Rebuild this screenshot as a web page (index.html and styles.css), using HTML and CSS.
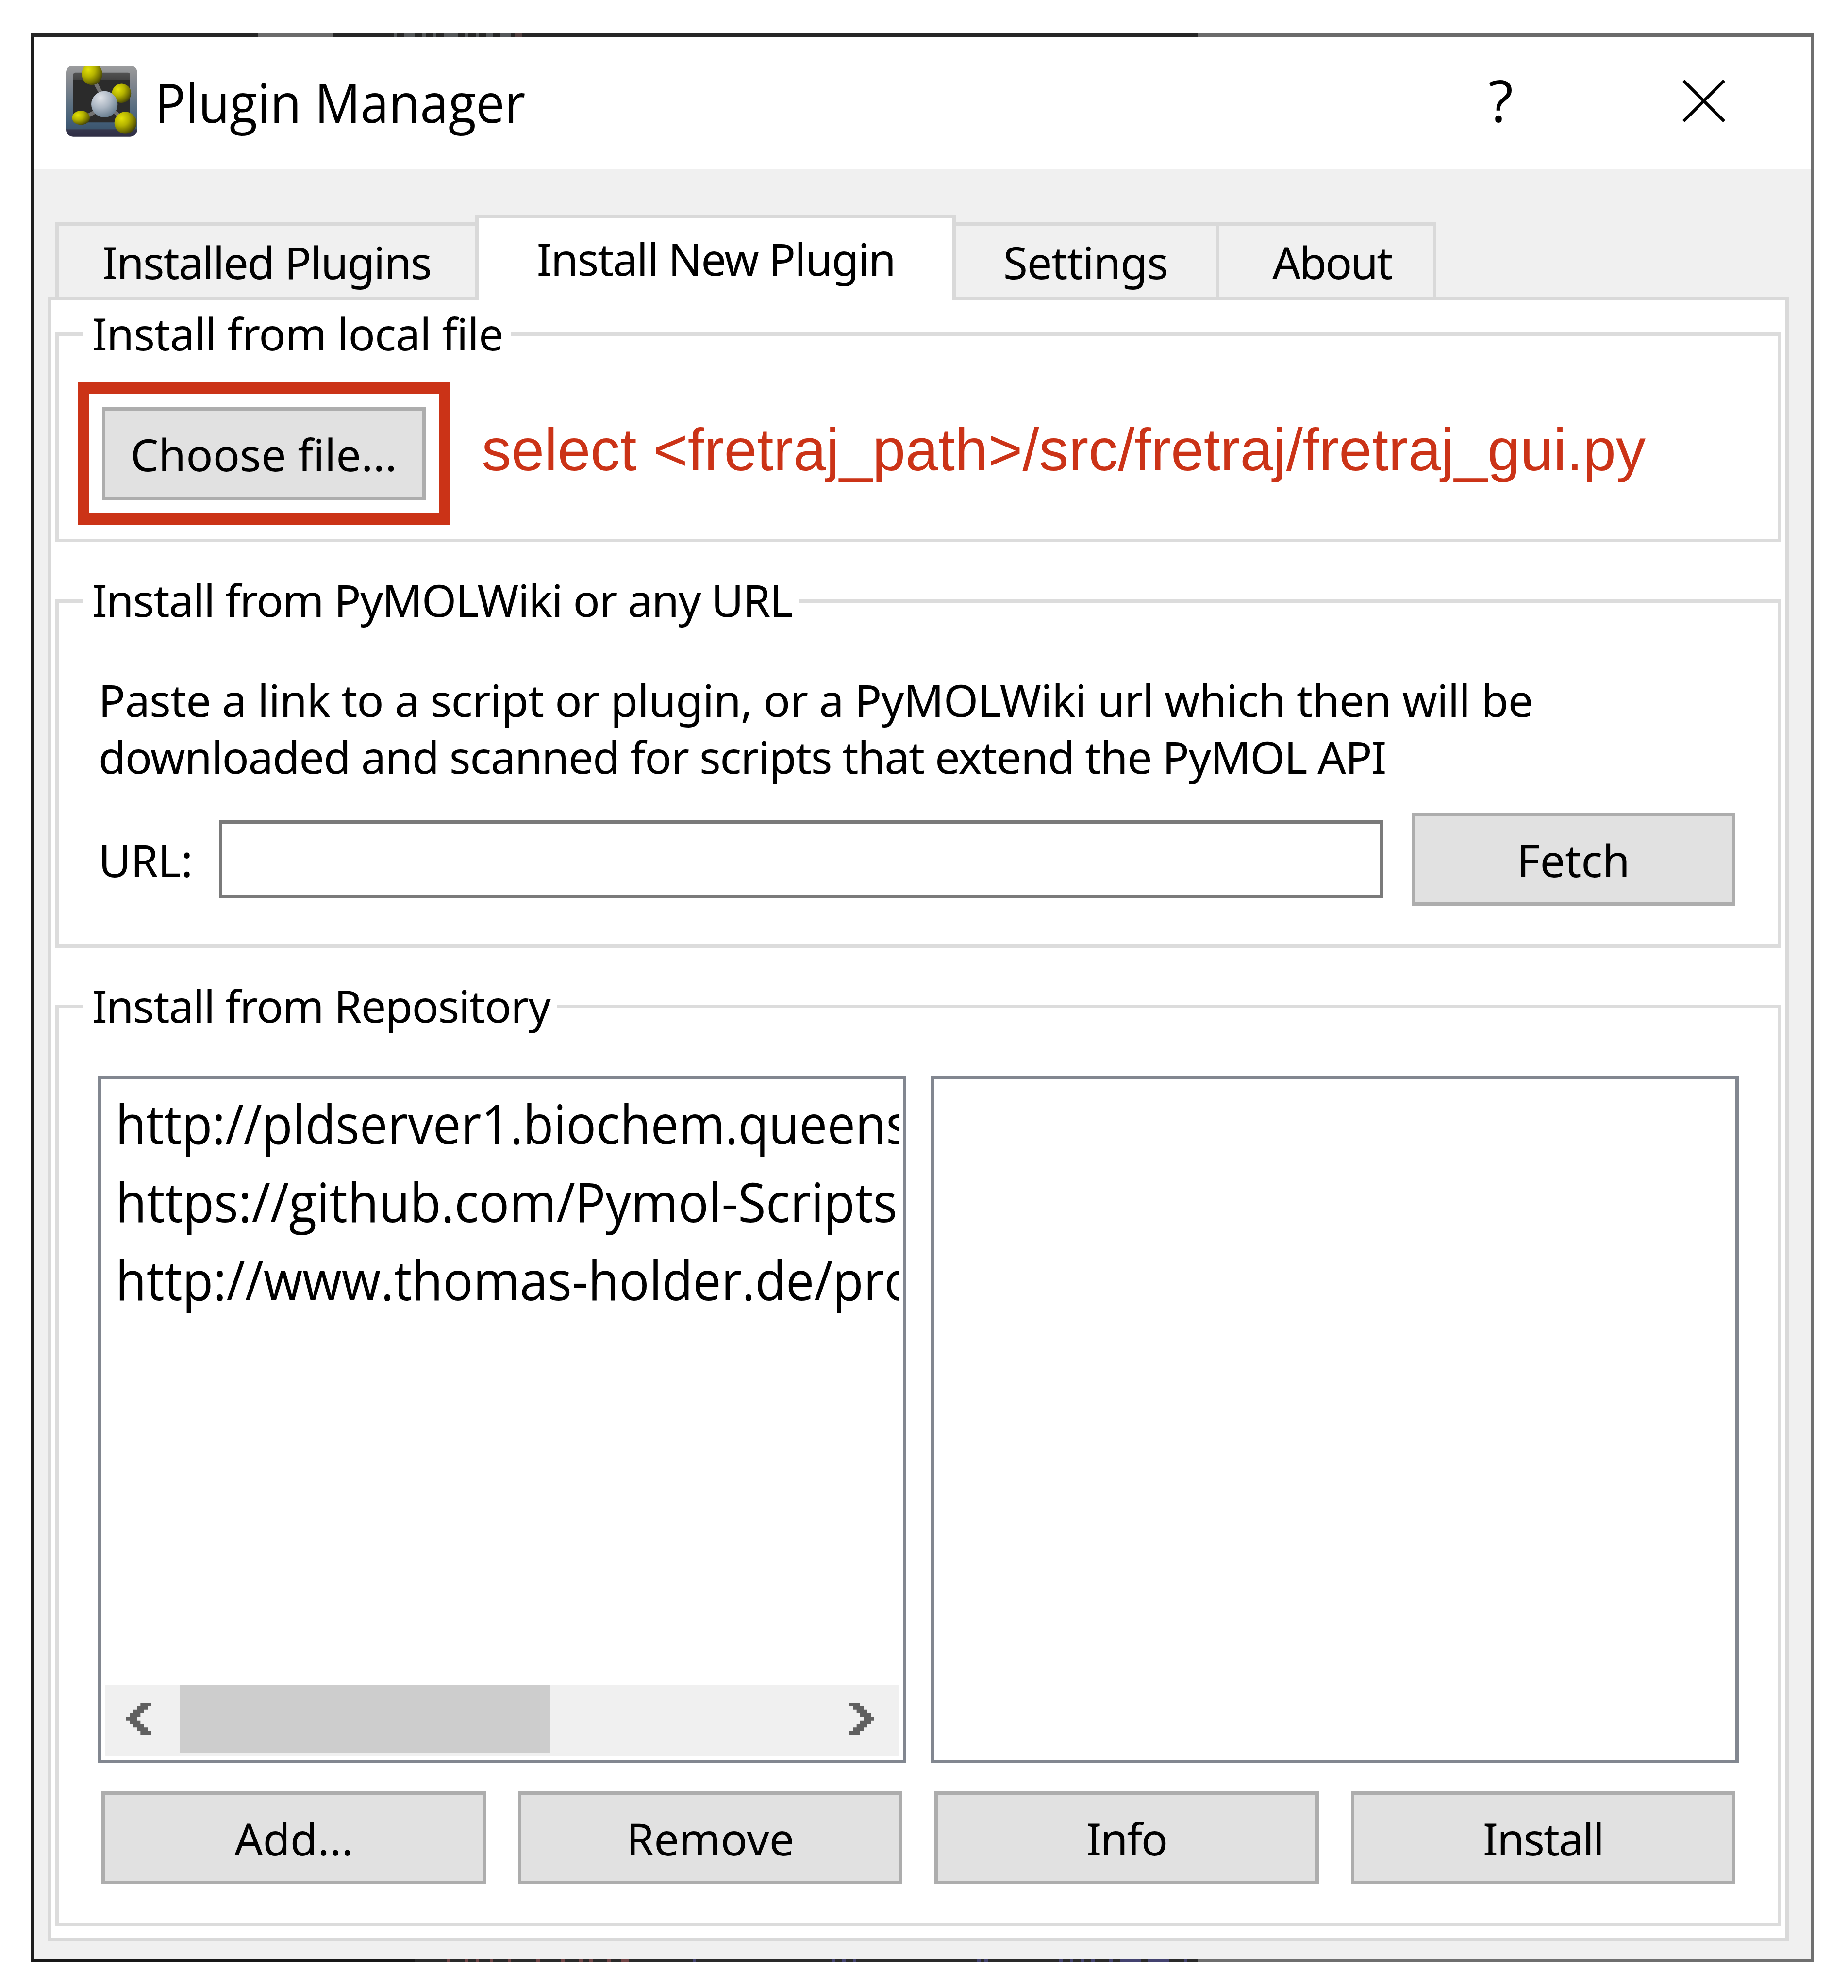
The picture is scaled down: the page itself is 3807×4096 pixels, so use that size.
FILE: index.html
```html
<!DOCTYPE html>
<html lang="en">
<head>
<meta charset="utf-8">
<title>Plugin Manager</title>
<link rel="stylesheet" href="styles.css">
</head>
<body>
<main class="window">
  <svg class="edge" viewBox="0 0 501 1" preserveAspectRatio="none" shape-rendering="crispEdges">
    <path fill="#262626" d="M0 0h501v1H0z"/>
    <path fill="#6b6b6b" d="M64 0h21v1H64zM328 0h173v1H328z"/>
    <path fill="#55585a" d="M102 0h1v1h-1zM105 0h3v1h-3zM110 0h1v1h-1zM113 0h1v1h-1zM116 0h4v1h-4zM122 0h1v1h-1zM125 0h1v1h-1zM128 0h2v1h-2zM132 0h3v1h-3z"/>
    <path fill="#544242" d="M136 0h2v1h-2z"/>
  </svg>
  <div class="frame">
    <header class="titlebar">
      <svg class="app-icon" viewBox="0 0 20 20">
        <defs>
          <linearGradient id="case" x1="0" y1="0" x2="0" y2="1">
            <stop offset="0" stop-color="#9c9d9f"/><stop offset=".12" stop-color="#8f9194"/>
            <stop offset=".3" stop-color="#7c838d"/><stop offset=".55" stop-color="#5d7182"/>
            <stop offset=".8" stop-color="#425d77"/><stop offset=".89" stop-color="#3c566e"/>
            <stop offset=".9" stop-color="#35364c"/><stop offset="1" stop-color="#2f2e45"/>
          </linearGradient>
          <linearGradient id="inside" x1="0" y1="0" x2="0" y2="1">
            <stop offset="0" stop-color="#525252"/><stop offset=".14" stop-color="#434343"/>
            <stop offset=".15" stop-color="#2b2b2b"/><stop offset="1" stop-color="#2b2b2b"/>
          </linearGradient>
          <radialGradient id="gold" cx=".32" cy=".3" r=".75">
            <stop offset="0" stop-color="#e4e208"/><stop offset=".45" stop-color="#b4b200"/>
            <stop offset=".8" stop-color="#737100"/><stop offset="1" stop-color="#46450a"/>
          </radialGradient>
          <radialGradient id="silver" cx=".35" cy=".25" r=".8">
            <stop offset="0" stop-color="#e0e3e8"/><stop offset=".5" stop-color="#aab5c2"/>
            <stop offset="1" stop-color="#647a8c"/>
          </radialGradient>
        </defs>
        <rect width="20" height="20" rx="2" fill="url(#case)"/>
        <rect x="2" y="2" width="16" height="14" rx=".6" fill="url(#inside)"/>
        <path d="M8.3 5 10.500 9M5 14.800l4-2.300M12.500 12l3 2.600M12 9.500l3-1.500" stroke="#727272" stroke-width="1.100"/>
        <ellipse cx="7.300" cy="2.400" rx="2.900" ry="3.100" fill="url(#gold)"/>
        <circle cx="15.600" cy="7.800" r="2.700" fill="url(#gold)"/>
        <circle cx="10.800" cy="10.900" r="3.700" fill="url(#silver)"/>
        <ellipse cx="4.200" cy="14.700" rx="2.500" ry="2" fill="url(#gold)"/>
        <circle cx="16.700" cy="16.100" r="3.100" fill="url(#gold)"/>
      </svg>
      <h1 class="title">Plugin Manager</h1>
      <span class="help">?</span>
      <svg class="close" viewBox="0 0 12 12"><path d="M.3.3 11.700 11.700M11.700.3.3 11.700" stroke="#000" stroke-width=".85"/></svg>
    </header>
    <nav class="tabs">
      <div class="tab tab-installed">Installed Plugins</div>
      <div class="tab tab-new active">Install New Plugin</div>
      <div class="tab tab-settings">Settings</div>
      <div class="tab tab-about">About</div>
    </nav>
    <section class="pane">
      <fieldset class="group group-local">
        <legend>Install from local file</legend>
        <div class="local-row">
          <div class="highlight"><div class="button">Choose file...</div></div>
          <div class="note">select &lt;fretraj_path&gt;/src/fretraj/fretraj_gui.py</div>
        </div>
      </fieldset>
      <fieldset class="group group-url">
        <legend>Install from PyMOLWiki or any URL</legend>
        <div class="hint">
          <div class="hint-first">Paste a link to a script or plugin, or a PyMOLWiki url which then will be</div>
          <div class="hint-second">downloaded and scanned for scripts that extend the PyMOL API</div>
        </div>
        <div class="url-row">
          <div class="url-label">URL:</div>
          <div class="url-field"></div>
          <div class="button">Fetch</div>
        </div>
      </fieldset>
      <fieldset class="group group-repo">
        <legend>Install from Repository</legend>
        <div class="lists">
          <div class="list">
            <div class="rows">
              <div class="row row-pld">http://pldserver1.biochem.queens</div>
              <div class="row row-git">https://github.com/Pymol-Scripts</div>
              <div class="row row-holder">http://www.thomas-holder.de/pro</div>
            </div>
            <div class="scrollbar">
              <svg class="arrow" viewBox="0 0 7 9"><path fill="#606060" d="M4 0h3v1H6v1H5v1H4v1H3v1h1v1h1v1h1v1h1v1H4V8H3V7H2V6H1V5H0V4h1V3h1V2h1V1h1z"/></svg>
              <div class="thumb"></div>
              <svg class="arrow arrow-right" viewBox="0 0 7 9"><path fill="#606060" d="M3 0H0v1h1v1h1v1h1v1h1v1H3v1H2v1H1v1H0v1h3V8h1V7h1V6h1V5h1V4H6V3H5V2H4V1H3z"/></svg>
            </div>
          </div>
          <div class="list"></div>
        </div>
        <div class="actions">
          <div class="button">Add...</div>
          <div class="button">Remove</div>
          <div class="button tight">Info</div>
          <div class="button tight">Install</div>
        </div>
      </fieldset>
    </section>
  </div>
  <svg class="edge" viewBox="0 0 501 1" preserveAspectRatio="none" shape-rendering="crispEdges">
    <path fill="#181818" d="M0 0h108v1H0z"/>
    <path fill="#2a2a2a" d="M108 0h220v1H108z"/>
    <path fill="#6f6f6f" d="M328 0h173v1H328z"/>
    <path fill="#714546" d="M117 0h1v1h-1zM122 0h1v1h-1zM125 0h1v1h-1zM129 0h1v1h-1zM134 0h1v1h-1zM142 0h1v1h-1zM149 0h1v1h-1zM154 0h1v1h-1zM157 0h1v1h-1zM162 0h1v1h-1zM166 0h2v1h-2z"/>
    <path fill="#444370" d="M186 0h1v1h-1zM225 0h1v1h-1zM228 0h1v1h-1zM231 0h1v1h-1zM266 0h1v1h-1zM268 0h1v1h-1zM289 0h1v1h-1zM292 0h1v1h-1zM295 0h1v1h-1zM298 0h1v1h-1zM303 0h1v1h-1zM306 0h6v1h-6zM314 0h6v1h-6zM324 0h1v1h-1z"/>
  </svg>
</main>
</body>
</html>
```
FILE: styles.css
```css
:root { --u: 7.3326px; }

* { box-sizing: border-box; }

body {
  margin: 0;
  padding: calc(9.4 * var(--u)) 0 0 calc(8.6 * var(--u));
  background: #fff;
  color: #000;
  font-family: "Noto Sans", sans-serif;
  font-size: calc(12.5 * var(--u));
  line-height: calc(16 * var(--u));
  white-space: nowrap;
  overflow: hidden;
}

.window { width: calc(501 * var(--u)); height: calc(542 * var(--u)); }
.edge { display: block; width: 100%; height: var(--u); }
.frame {
  height: calc(540 * var(--u));
  border-left: var(--u) solid #1d1d1d;
  border-right: var(--u) solid #6f6f6f;
  background: #f0f0f0;
}

.titlebar {
  display: flex;
  align-items: flex-start;
  height: calc(37 * var(--u));
  padding-left: calc(9 * var(--u));
  background: #fff;
  font-family: "Open Sans", sans-serif;
}
.app-icon { width: calc(20 * var(--u)); height: calc(20 * var(--u)); margin-top: calc(8 * var(--u)); }
.title {
  width: calc(374.6 * var(--u));
  margin: calc(8.3 * var(--u)) 0 0 calc(5 * var(--u));
  font-size: calc(15.2 * var(--u));
  line-height: calc(20 * var(--u));
  font-weight: 400;
  transform: scaleX(.942);
  transform-origin: left;
}
.help {
  width: calc(54.5 * var(--u));
  margin-top: calc(7.6 * var(--u));
  font-size: calc(16.2 * var(--u));
  line-height: calc(20 * var(--u));
}
.close { width: calc(12 * var(--u)); height: calc(12 * var(--u)); margin-top: calc(12 * var(--u)); }

.tabs {
  display: flex;
  align-items: flex-start;
  height: calc(36 * var(--u));
  padding: calc(13 * var(--u)) 0 0 calc(6 * var(--u));
}
.tab {
  height: calc(21 * var(--u));
  margin-top: calc(2 * var(--u));
  padding-top: calc(2.3 * var(--u));
  border: 0 solid #d9d9d9;
  border-top-width: var(--u);
}
.tab-installed { width: calc(118 * var(--u)); padding-left: calc(12.3 * var(--u)); border-left-width: var(--u); letter-spacing: calc(-.28 * var(--u)); }
.tab-new { width: calc(135 * var(--u)); padding-left: calc(16.3 * var(--u)); border-left-width: var(--u); border-right-width: var(--u); letter-spacing: calc(-.28 * var(--u)); }
.tab-settings { width: calc(74 * var(--u)); padding-left: calc(13.3 * var(--u)); border-right-width: var(--u); letter-spacing: calc(-.16 * var(--u)); }
.tab-about { width: calc(61 * var(--u)); padding-left: calc(14.9 * var(--u)); border-right-width: var(--u); letter-spacing: calc(-.4 * var(--u)); }
.tab.active {
  position: relative;
  z-index: 1;
  height: calc(24 * var(--u));
  margin-top: 0;
  padding-top: calc(3.3 * var(--u));
  background: #fff;
}

.pane {
  width: calc(489 * var(--u));
  height: calc(462 * var(--u));
  margin-left: calc(4 * var(--u));
  padding: calc(1.5 * var(--u)) var(--u) 0;
  border: var(--u) solid #d9d9d9;
  background: #fff;
}
.group {
  width: calc(485 * var(--u));
  min-width: 0;
  margin: 0 0 calc(8.5 * var(--u));
  padding: 0;
  border: var(--u) solid #dcdcdc;
}
.group legend {
  height: calc(16 * var(--u));
  margin-left: calc(7 * var(--u));
  padding: 0 0 0 calc(2.4 * var(--u));
  line-height: calc(15.5 * var(--u));
}
.group-local { height: calc(66.5 * var(--u)); }
.group-local legend { width: calc(120.1 * var(--u)); letter-spacing: calc(-.15 * var(--u)); }
.group-url { height: calc(105.5 * var(--u)); }
.group-url legend { width: calc(201.1 * var(--u)); letter-spacing: calc(-.22 * var(--u)); }
.group-repo { height: calc(266.5 * var(--u)); margin-bottom: 0; }
.group-repo legend { width: calc(133.1 * var(--u)); letter-spacing: calc(-.22 * var(--u)); }

.button {
  width: calc(91 * var(--u));
  height: calc(26 * var(--u));
  border: var(--u) solid #adadad;
  background: #e1e1e1;
  line-height: calc(24.6 * var(--u));
  text-align: center;
}

.local-row { display: flex; padding: calc(5.5 * var(--u)) 0 0 calc(5.35 * var(--u)); }
.highlight {
  width: calc(104.8 * var(--u));
  height: calc(40.05 * var(--u));
  padding: calc(3.8 * var(--u)) 0 0 calc(3.5 * var(--u));
  border: calc(3.35 * var(--u)) solid #cb3317;
}
.note {
  margin-left: calc(8.7 * var(--u));
  color: #cb3317;
  font-family: "Liberation Sans", Arial, sans-serif;
  font-size: calc(16.67 * var(--u));
  line-height: calc(38.2 * var(--u));
}

.hint { padding: calc(11.75 * var(--u)) 0 0 calc(11.2 * var(--u)); }
.hint-first { letter-spacing: calc(-.115 * var(--u)); }
.hint-second { letter-spacing: calc(-.205 * var(--u)); }
.url-row {
  display: flex;
  align-items: center;
  height: calc(26 * var(--u));
  margin: calc(7.85 * var(--u)) 0 0 calc(11.2 * var(--u));
}
.url-label { width: calc(33.9 * var(--u)); padding-top: calc(.3 * var(--u)); letter-spacing: calc(-.1 * var(--u)); }
.url-field {
  width: calc(327 * var(--u));
  height: calc(22 * var(--u));
  margin-right: calc(8 * var(--u));
  border: var(--u) solid #7a7a7a;
}

.lists { display: flex; gap: calc(7 * var(--u)); padding: calc(11.55 * var(--u)) 0 0 calc(11.1 * var(--u)); }
.list {
  display: flex;
  flex-direction: column;
  justify-content: space-between;
  width: calc(227 * var(--u));
  height: calc(193 * var(--u));
  padding: var(--u);
  border: var(--u) solid #828790;
}
.rows { padding: calc(.3 * var(--u)) 0 0 calc(3 * var(--u)); overflow: hidden; }
.row {
  font-family: "Open Sans", sans-serif;
  font-size: calc(15.2 * var(--u));
  line-height: calc(22 * var(--u));
  transform-origin: left;
}
.row-pld { transform: scaleX(.923); }
.row-git { transform: scaleX(.94); }
.row-holder { transform: scaleX(.932); }

.scrollbar { display: flex; height: calc(20 * var(--u)); background: #f0f0f0; }
.arrow { width: calc(7 * var(--u)); height: calc(9 * var(--u)); margin: calc(5 * var(--u)) calc(8 * var(--u)) 0 calc(6 * var(--u)); }
.arrow-right { margin: calc(5 * var(--u)) calc(7 * var(--u)) 0 auto; }
.thumb { width: calc(104 * var(--u)); height: calc(19 * var(--u)); background: #cdcdcd; }

.actions { display: flex; gap: calc(9 * var(--u)); padding: calc(8 * var(--u)) 0 0 calc(12.1 * var(--u)); }
.actions .button { width: calc(108 * var(--u)); }
.actions .tight { letter-spacing: calc(-.3 * var(--u)); }
```
